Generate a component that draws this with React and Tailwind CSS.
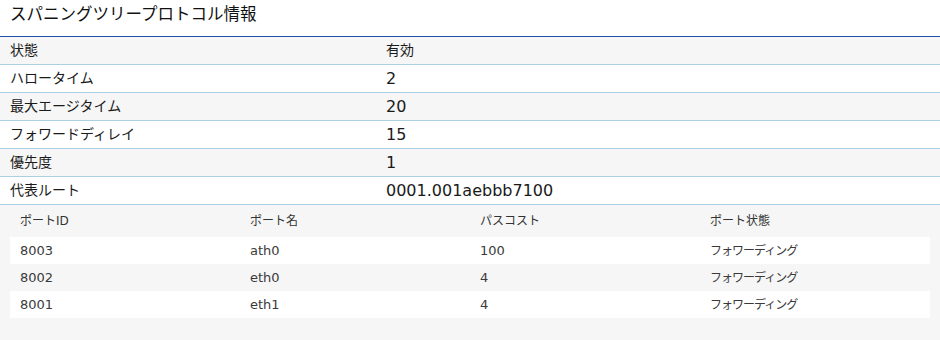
import React from "react";

const info = [
  ["状態", "有効", true],
  ["ハロータイム", "2"],
  ["最大エージタイム", "20"],
  ["フォワードディレイ", "15"],
  ["優先度", "1"],
  ["代表ルート", "0001.001aebbb7100"],
];

const ports = [
  ["8003", "ath0", "100", "フォワーディング"],
  ["8002", "eth0", "4", "フォワーディング"],
  ["8001", "eth1", "4", "フォワーディング"],
];

export default function App() {
  return (
    <div
      className="w-[940px] h-[340px] bg-white text-[#1a1a1a] overflow-hidden"
      style={{ fontFamily: '"DejaVu Sans", "Noto Sans CJK JP", sans-serif' }}
    >
      {/* title */}
      <div className="h-[36px] px-[10px] pt-[3px] text-[16.5px] leading-[24px] text-[#111]">
        スパニングツリープロトコル情報
      </div>

      {/* info table */}
      <div className="border-t border-[#1f4fa8]">
        {info.map((row, i) => (
          <div
            key={i}
            className={`flex h-[28px] items-center border-b border-[#abcfe3] ${
              i % 2 === 0 ? "bg-[#f6f6f6]" : "bg-white"
            }`}
          >
            <div className="w-[376px] pl-[10px] text-[14px]">{row[0]}</div>
            <div className={`pl-[10px] ${row[2] ? "text-[14px]" : "text-[16px] pt-[1px]"}`}>
              {row[1]}
            </div>
          </div>
        ))}
      </div>

      {/* port table */}
      <div className="bg-[#f6f6f6] px-[10px] h-[136px]">
        <div className="grid grid-cols-4 h-[32px] items-center text-[12px] text-[#333]">
          <div className="pl-[10px]">ポートID</div>
          <div className="pl-[10px]">ポート名</div>
          <div className="pl-[10px]">パスコスト</div>
          <div className="pl-[10px]">ポート状態</div>
        </div>
        {ports.map((p, i) => (
          <div
            key={i}
            className={`grid grid-cols-4 h-[27px] items-center text-[13px] text-[#3a3a3a] ${
              i % 2 === 0 ? "bg-white" : "bg-[#f6f6f6]"
            }`}
          >
            <div className="pl-[10px]">{p[0]}</div>
            <div className="pl-[10px]">{p[1]}</div>
            <div className="pl-[10px]">{p[2]}</div>
            <div className="pl-[10px] text-[12px] tracking-[-1px]">{p[3]}</div>
          </div>
        ))}
      </div>
    </div>
  );
}
